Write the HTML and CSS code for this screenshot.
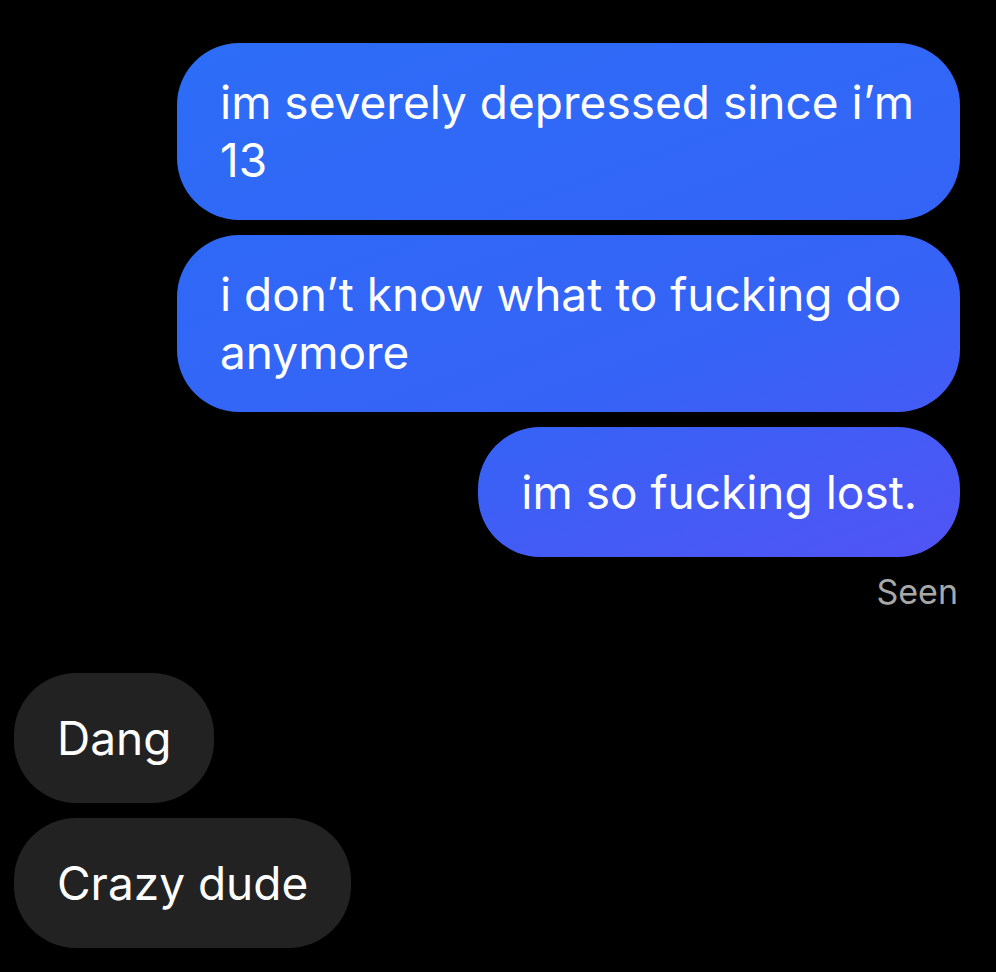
FILE: index.html
```html
<!DOCTYPE html>
<html>
<head>
<meta charset="utf-8">
<link rel="stylesheet" href="styles.css">
</head>
<body>
<div class="thread">
  <div class="bubble out">im severely depressed since i’m 13</div>
  <div class="bubble out">i don’t know what to fucking do anymore</div>
  <div class="bubble out">im so fucking lost.</div>
  <div class="seen">Seen</div>
  <div class="bubble in first">Dang</div>
  <div class="bubble in">Crazy dude</div>
</div>
</body>
</html>
```
FILE: styles.css
```css
html, body {
  margin: 0;
  padding: 0;
  background: #000;
}
.thread {
  display: flex;
  flex-direction: column;
  gap: 15px;
  padding: 43px 36px 0 14px;
  font-family: Inter, "Noto Sans", sans-serif;
  font-size: 46px;
  line-height: 58px;
  color: #fff;
}
.bubble {
  box-sizing: border-box;
  min-height: 130px;
  padding: 30px 43px 31px;
  border-radius: 62px;
  display: flex;
  align-items: center;
  max-width: 783px;
}
.out {
  align-self: flex-end;
  background: linear-gradient(160deg, #2a6ff7 0%, #3563f6 45%, #5a4ff3 75%, #6a48f2 100%);
  background-attachment: fixed;
}
.in {
  align-self: flex-start;
  background: #222222;
}
.seen {
  align-self: flex-end;
  margin-right: 2px;
  font-size: 34px;
  line-height: 40px;
  color: #a8a8a8;
}
.in.first {
  margin-top: 46px;
}
```
